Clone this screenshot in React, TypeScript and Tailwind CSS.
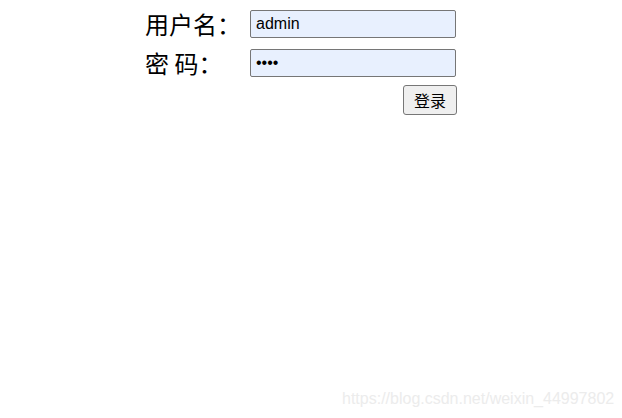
import React from "react";

export default function App() {
  return (
    <div className="relative w-[622px] h-[418px] bg-white overflow-hidden" style={{ fontFamily: '"Liberation Sans", "Noto Sans CJK SC", sans-serif' }}>
      <form className="pt-[10px] pl-[145px]" onSubmit={(e) => e.preventDefault()}>
        <div className="grid grid-cols-[105px_206px] items-center">
          <label className="text-[24px] leading-[28px] text-black" style={{ fontFamily: '"Noto Sans CJK SC", sans-serif' }}>用户名：</label>
          <input
            type="text"
            readOnly
            value="admin"
            className="w-[206px] h-[28px] border border-[#767676] rounded-[2px] bg-[#e8f0fe] pl-[5px] text-[16px] text-black outline-none"
          />
          <label className="mt-[11px] text-[24px] leading-[28px] text-black" style={{ fontFamily: '"Noto Sans CJK SC", sans-serif' }}>密 码：</label>
          <input
            type="password"
            readOnly
            value="1234"
            className="mt-[11px] w-[206px] h-[28px] border border-[#767676] rounded-[2px] bg-[#e8f0fe] pl-[5px] text-[16px] text-black outline-none"
          />
          <div />
          <div className="mt-[8px] flex justify-end">
            <button
              type="submit"
              className="mr-[-1px] w-[54px] h-[30px] border border-[#767676] rounded-[3px] bg-[#efefef] text-[16px] text-black"
              style={{ fontFamily: '"Noto Sans CJK SC", sans-serif' }}
            >
              登录
            </button>
          </div>
        </div>
      </form>
      <div className="absolute left-[342px] top-[390px] text-[16px] leading-[18px] text-[#ececec] whitespace-nowrap">
        https://blog.csdn.net/weixin_44997802
      </div>
    </div>
  );
}
